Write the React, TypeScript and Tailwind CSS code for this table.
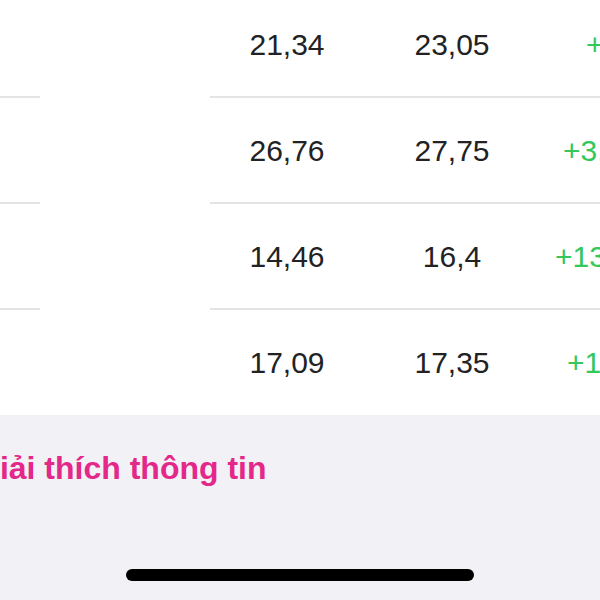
const rows = [
  { a: '21,34', b: '23,05', c: '+8%', pad: 'pl-[46px]' },
  { a: '26,76', b: '27,75', c: '+3,7%', pad: 'pl-[23px]' },
  { a: '14,46', b: '16,4', c: '+13,4%', pad: 'pl-[15px]' },
  { a: '17,09', b: '17,35', c: '+1,5%', pad: 'pl-[27px]' },
];

function Row({ r, last }: { r: (typeof rows)[number]; last: boolean }) {
  return (
    <div className="relative h-[106px] flex items-center">
      <div className="w-[207px] shrink-0" />
      <div className="w-[160px] shrink-0 text-center">{r.a}</div>
      <div className="w-[5px] shrink-0" />
      <div className="w-[160px] shrink-0 text-center">{r.b}</div>
      <div className="w-[8px] shrink-0" />
      <div className={`w-[140px] shrink-0 whitespace-nowrap text-[#34c759] ${r.pad}`}>{r.c}</div>
      {!last && (
        <>
          {/* separator, middle part is blurred out in the screenshot */}
          <div className="absolute bottom-0 left-0 w-[40px] h-[2px] bg-[#e4e4e6]" />
          <div className="absolute bottom-0 left-[210px] right-0 h-[2px] bg-[#e4e4e6]" />
        </>
      )}
    </div>
  );
}

export default function App() {
  return (
    <div className="w-[600px] h-[600px] overflow-hidden bg-[#f2f1f6] flex flex-col font-['Liberation_Sans',Arial,sans-serif]">
      <div className="bg-white h-[415px] shrink-0 overflow-hidden">
        <div className="mt-[-8px] text-[30px] leading-none text-[#222224]">
          {rows.map((r, i) => (
            <Row key={i} r={r} last={i === rows.length - 1} />
          ))}
        </div>
      </div>
      <div className="pt-[37px] ml-[-25px] text-[32px] leading-none font-bold text-[#e3288a] whitespace-nowrap">
        Giải thích thông tin
      </div>
      <div className="mt-auto mb-[19px] flex justify-center">
        <div className="w-[348px] h-[12px] rounded-full bg-black" />
      </div>
    </div>
  );
}
